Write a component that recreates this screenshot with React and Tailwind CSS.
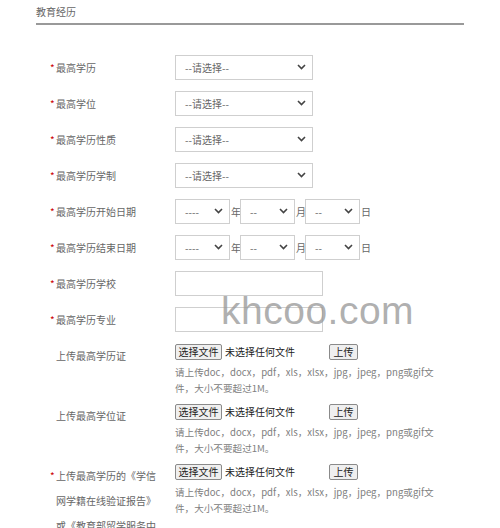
const font = { fontFamily: '"Noto Sans CJK SC", "Noto Sans", sans-serif' }

function Chevron() {
  return (
    <svg width="9" height="6" viewBox="0 0 9 6" className="shrink-0">
      <path d="M1 1l3.5 3.5L8 1" fill="none" stroke="#444" strokeWidth="1.6" />
    </svg>
  )
}

function Select({ text = '--请选择--', w = 'w-[138px]' }) {
  return (
    <div className={`${w} h-[25px] border border-[#cfcfcf] bg-white flex items-center justify-between pl-[9px] pr-[6px]`}>
      <span className="text-[10px] text-[#666]">{text}</span>
      <Chevron />
    </div>
  )
}

function Label({ children, req = true }) {
  return (
    <div className="w-[125px] shrink-0 flex items-center text-[10px] text-[#666]">
      <span className={`w-[6px] text-[#c00] ${req ? '' : 'invisible'}`}>*</span>
      {children}
    </div>
  )
}

function Row({ label, req, children }) {
  return (
    <div className="flex items-center h-[25px] mb-[11px]">
      <Label req={req}>{label}</Label>
      <div className="flex items-center">{children}</div>
    </div>
  )
}

function DateRow({ label }) {
  return (
    <Row label={label}>
      <Select text="----" w="w-[55px]" />
      <span className="text-[10px] text-[#666] w-[10px] pl-[1px]">年</span>
      <Select text="--" w="w-[55px]" />
      <span className="text-[10px] text-[#666] w-[10px] pl-[1px]">月</span>
      <Select text="--" w="w-[55px]" />
      <span className="text-[10px] text-[#666] pl-[1px]">日</span>
    </Row>
  )
}

function Upload({ label, req = false }) {
  return (
    <div className="flex">
      <div className="w-[125px] shrink-0 text-[10px] text-[#666] leading-[25px] -mt-[1px]">
        {label.map((l, i) => (
          <div key={i} className="flex">
            <span className={`w-[6px] text-[#c00] ${req && i === 0 ? '' : 'invisible'}`}>*</span>
            {l}
          </div>
        ))}
      </div>
      <div>
        <div className="flex items-center h-[16px]">
          <div className="w-[47px] h-[16px] border border-[#8a8a8a] rounded-[2px] bg-[#efefef] text-[10px] text-[#222] flex items-center justify-center">选择文件</div>
          <span className="text-[10px] text-[#222] ml-[3px] w-[104px]">未选择任何文件</span>
          <div className="w-[29px] h-[16px] border border-[#8a8a8a] rounded-[2px] bg-[#efefef] text-[10px] text-[#222] flex items-center justify-center">上传</div>
        </div>
        <div className="text-[9.6px] text-[#808080] leading-[16px] mt-[4px]">
          请上传doc，docx，pdf，xls，xlsx，jpg，jpeg，png或gif文
          <br />
          件，大小不要超过1M。
        </div>
      </div>
    </div>
  )
}

export default function App() {
  return (
    <div className="relative w-[500px] h-[528px] bg-white overflow-hidden" style={font}>
      <div className="pl-[36px] w-[464px]">
        <div className="text-[10px] text-[#666] pt-[4px] pb-[4px]">教育经历</div>
        <div className="h-[1.5px] bg-[#999]" />
        <div className="pt-[30px] pl-[14px]">
          <Row label="最高学历"><Select /></Row>
          <Row label="最高学位"><Select /></Row>
          <Row label="最高学历性质"><Select /></Row>
          <Row label="最高学历学制"><Select /></Row>
          <DateRow label="最高学历开始日期" />
          <DateRow label="最高学历结束日期" />
          <Row label="最高学历学校">
            <div className="w-[148px] h-[25px] border border-[#cfcfcf]" />
          </Row>
          <Row label="最高学历专业">
            <div className="w-[148px] h-[25px] border border-[#cfcfcf]" />
          </Row>
          <div className="pt-[1px] flex flex-col gap-[8px]">
            <Upload label={['上传最高学历证']} />
            <Upload label={['上传最高学位证']} />
            <Upload req label={['上传最高学历的《学信', '网学籍在线验证报告》', '或《教育部留学服务中']} />
          </div>
        </div>
      </div>
      <div className="absolute left-[221px] top-[291px] text-[39px] leading-none text-[#9a9a9a]/80 tracking-[0.5px]" style={{ fontFamily: '"Liberation Sans", Arial, sans-serif' }}>
        khcoo.com
      </div>
    </div>
  )
}
